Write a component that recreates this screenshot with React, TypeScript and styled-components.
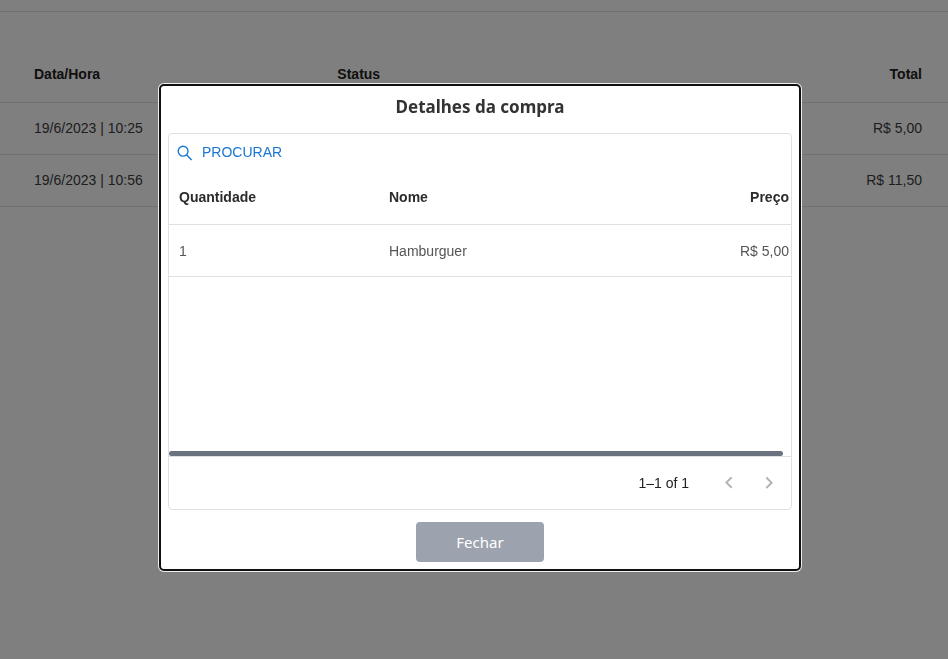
import React from "react";
import styled, { createGlobalStyle } from "styled-components";

const GlobalStyle = createGlobalStyle`
  *, *::before, *::after { box-sizing: border-box; }
  body {
    margin: 0;
    background: #fff;
    font-family: "Liberation Sans", Arial, sans-serif;
    font-size: 14px;
  }
`;

const Page = styled.main`
  min-height: 100vh;
  padding-top: 11px;
`;

const OrdersPanel = styled.section`
  border-top: 1px solid #e0e0e0;
  padding-top: 35px;
`;

const Table = styled.table`
  width: 100%;
  table-layout: fixed;
  border-collapse: separate;
  border-spacing: 0;
  line-height: 20px;
`;

const Column = styled.col<{ $width?: string }>`
  width: ${({ $width }) => $width ?? "auto"};
`;

type CellProps = { $end?: boolean; $modal?: boolean };

const cellPadding = ({ $modal }: CellProps) =>
  $modal ? "0 2px 0 10px" : "0 26px 2px 34px";

const HeadCell = styled.th<CellProps>`
  height: 56px;
  padding: ${cellPadding};
  border-bottom: 1px solid #e0e0e0;
  color: ${({ $modal }) => ($modal ? "#2b2b2b" : "#212121")};
  font-weight: 700;
  text-align: ${({ $end }) => ($end ? "right" : "left")};
`;

const Cell = styled.td<CellProps>`
  height: 52px;
  padding: ${cellPadding};
  border-bottom: 1px solid #e0e0e0;
  color: ${({ $modal }) => ($modal ? "#555" : "#3c3c3c")};
  text-align: ${({ $end }) => ($end ? "right" : "left")};
  white-space: nowrap;
`;

const Overlay = styled.div`
  position: fixed;
  inset: 0;
  display: flex;
  align-items: center;
  justify-content: center;
  padding: 0 0 4px 12px;
  background: rgba(0, 0, 0, 0.5);
`;

const Modal = styled.div`
  display: flex;
  flex-direction: column;
  align-items: center;
  width: 100%;
  max-width: 642px;
  padding: 7px;
  border: 2px solid #101010;
  border-radius: 5px;
  background: #fff;
  box-shadow: 0 0 0 1px #eee;
`;

const Title = styled.h2`
  margin: 0 0 12px;
  color: #333;
  font: 700 17px/28px "Noto Sans", "Open Sans", sans-serif;
`;

const Grid = styled.section`
  width: 100%;
  border: 1px solid #e0e0e0;
  border-radius: 4px;
`;

const Toolbar = styled.div`
  display: flex;
  height: 35px;
  padding: 4px 2px 0;
`;

const SearchButton = styled.button`
  display: flex;
  align-items: center;
  gap: 7px;
  height: 30px;
  padding: 0 4px;
  border: 0;
  background: none;
  color: #1976d2;
  font: 400 14px/20px "Liberation Sans", Arial, sans-serif;
  text-transform: uppercase;
`;

const SearchLabel = styled.span`
  padding-bottom: 2px;
`;

const GridBody = styled.div`
  height: 282px;
`;

const ScrollTrack = styled.div`
  padding-right: 8px;
`;

const ScrollThumb = styled.div`
  height: 5px;
  border-radius: 3px;
  background: #6b7280;
`;

const Footer = styled.footer`
  display: flex;
  align-items: center;
  justify-content: flex-end;
  height: 53px;
  padding-right: 2px;
  border-top: 1px solid #e0e0e0;
  color: #212121;
`;

const Range = styled.span`
  margin-right: 20px;
  padding-bottom: 1px;
`;

const PageButton = styled.button`
  display: flex;
  padding: 8px;
  border: 0;
  background: none;
  color: #b4b4b4;
`;

const CloseButton = styled.button`
  width: 128px;
  height: 40px;
  margin-top: 12px;
  border: 0;
  border-radius: 4px;
  background: #9ca3af;
  color: #fff;
  font: 400 15px/24px "Noto Sans", "Open Sans", sans-serif;
`;

const Icon = ({ d, size }: { d: string; size: number }) => (
  <svg width={size} height={size} viewBox="0 0 24 24" fill="currentColor" aria-hidden="true">
    <path d={d} />
  </svg>
);

const SearchIcon = () => (
  <svg width="20" height="20" viewBox="0 0 20 20" fill="none" stroke="currentColor" strokeWidth="1.4" aria-hidden="true">
    <circle cx="8.1" cy="8.2" r="4.9" />
    <path d="M11.6 11.8 16.6 16.9" />
  </svg>
);

const ARROW_LEFT = "M15.41 16.09l-4.58-4.59 4.58-4.59L14 5.5l-6 6 6 6z";
const ARROW_RIGHT = "M8.59 16.34l4.58-4.59-4.58-4.59L10 5.75l6 6-6 6z";

const orders = [
  { date: "19/6/2023 | 10:25", status: "", total: "R$ 5,00" },
  { date: "19/6/2023 | 10:56", status: "", total: "R$ 11,50" },
];

const items = [{ quantity: 1, name: "Hamburguer", price: "R$ 5,00" }];

export default function App() {
  return (
    <>
      <GlobalStyle />
      <Page>
        <OrdersPanel>
          <Table>
            <colgroup>
              <Column $width="32%" />
              <Column />
              <Column $width="32%" />
            </colgroup>
            <thead>
              <tr>
                <HeadCell>Data/Hora</HeadCell>
                <HeadCell>Status</HeadCell>
                <HeadCell $end>Total</HeadCell>
              </tr>
            </thead>
            <tbody>
              {orders.map((order) => (
                <tr key={order.date}>
                  <Cell>{order.date}</Cell>
                  <Cell>{order.status}</Cell>
                  <Cell $end>{order.total}</Cell>
                </tr>
              ))}
            </tbody>
          </Table>
        </OrdersPanel>
      </Page>
      <Overlay>
        <Modal role="dialog" aria-modal="true" aria-labelledby="purchase-title">
          <Title id="purchase-title">Detalhes da compra</Title>
          <Grid>
            <Toolbar>
              <SearchButton type="button">
                <SearchIcon />
                <SearchLabel>Procurar</SearchLabel>
              </SearchButton>
            </Toolbar>
            <GridBody>
              <Table>
                <colgroup>
                  <Column $width="210px" />
                  <Column />
                  <Column $width="200px" />
                </colgroup>
                <thead>
                  <tr>
                    <HeadCell $modal>Quantidade</HeadCell>
                    <HeadCell $modal>Nome</HeadCell>
                    <HeadCell $modal $end>Preço</HeadCell>
                  </tr>
                </thead>
                <tbody>
                  {items.map((item) => (
                    <tr key={item.name}>
                      <Cell $modal>{item.quantity}</Cell>
                      <Cell $modal>{item.name}</Cell>
                      <Cell $modal $end>{item.price}</Cell>
                    </tr>
                  ))}
                </tbody>
              </Table>
            </GridBody>
            <ScrollTrack>
              <ScrollThumb />
            </ScrollTrack>
            <Footer>
              <Range>1–1 of 1</Range>
              <PageButton type="button" aria-label="Previous page" disabled>
                <Icon d={ARROW_LEFT} size={24} />
              </PageButton>
              <PageButton type="button" aria-label="Next page" disabled>
                <Icon d={ARROW_RIGHT} size={24} />
              </PageButton>
            </Footer>
          </Grid>
          <CloseButton type="button">Fechar</CloseButton>
        </Modal>
      </Overlay>
    </>
  );
}
